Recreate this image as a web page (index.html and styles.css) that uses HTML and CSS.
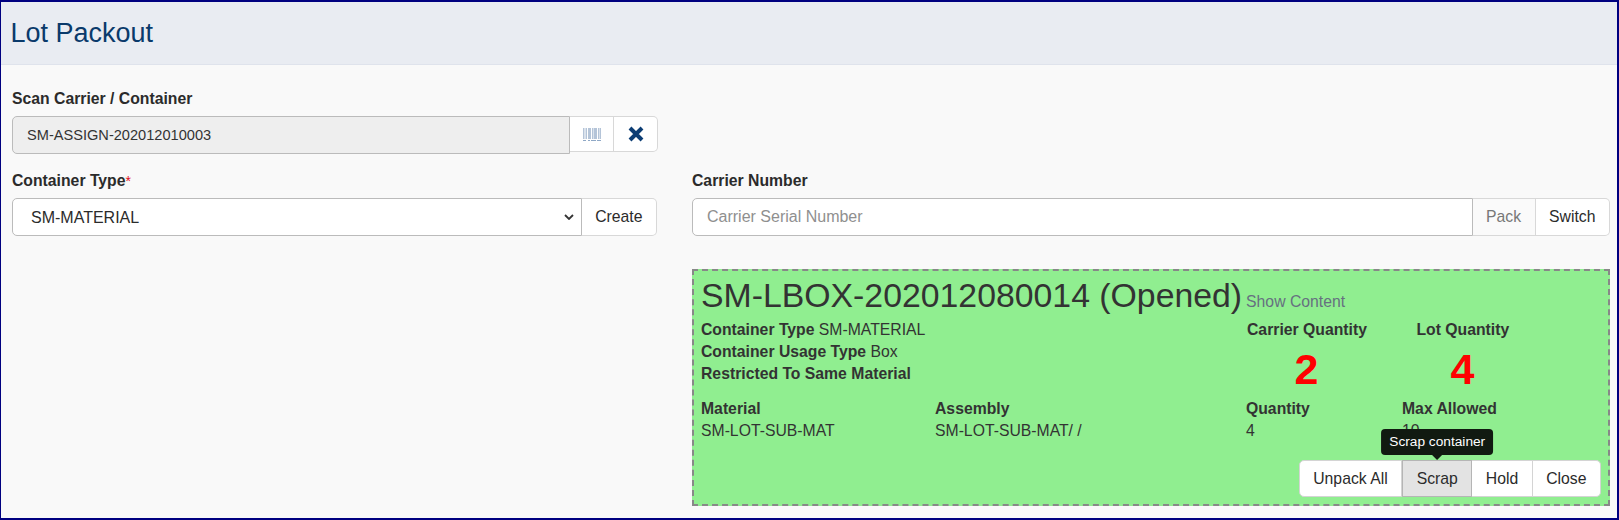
FILE: index.html
```html
<!DOCTYPE html>
<html lang="en">
<head>
    <meta charset="UTF-8">
    <title>Lot Packout</title>
    <link rel="stylesheet" href="styles.css">
</head>
<body>
    <div class="page">
        <h1 class="page-title">Lot Packout</h1>
        <div class="content">
            <div class="scan-row">
                <label class="field-label">Scan Carrier / Container</label>
                <div class="input-group">
                    <input type="text" class="text-input scan-input" value="SM-ASSIGN-202012010003" disabled>
                    <button class="btn btn-icon" title="Scan">
                        <svg width="18" height="13" viewBox="0 0 18 13">
                            <path d="M0 0h1.500v11H0zM2.500 0h1.500v11H2.500zM5 0h3v11H5zM9 0h1.500v11H9zM11 0h3v11h-3zM15 0h1v11h-1zM16.500 0h1.500v11h-1.500z" fill="#b4c4d8"/>
                            <path d="M0 12.500h3M5 12.500h2M8 12.500h5M14 12.500h4" stroke="#8fa8c6" stroke-width="1"/>
                        </svg>
                    </button>
                    <button class="btn btn-icon" title="Clear">
                        <svg width="16" height="16" viewBox="0 0 16 16">
                            <path d="M2 2l12 12M14 2L2 14" stroke="#0c3d74" stroke-width="4" fill="none"/>
                        </svg>
                    </button>
                </div>
            </div>

            <div class="form-columns">
                <div>
                    <label class="field-label">Container Type<span class="required">*</span></label>
                    <div class="input-group">
                        <select class="select-input">
                            <option>SM-MATERIAL</option>
                        </select>
                        <button class="btn">Create</button>
                    </div>
                </div>

                <div>
                    <label class="field-label">Carrier Number</label>
                    <div class="input-group">
                        <input type="text" class="text-input carrier-input" placeholder="Carrier Serial Number">
                        <button class="btn btn-disabled">Pack</button>
                        <button class="btn">Switch</button>
                    </div>

                    <div class="container-card">
                        <div class="card-heading">
                            <span class="card-title">SM-LBOX-202012080014 (Opened)</span>
                            <a class="show-content">Show Content</a>
                        </div>
                        <div class="card-grid">
                            <div class="card-info">
                                <div><b>Container Type</b> SM-MATERIAL</div>
                                <div><b>Container Usage Type</b> Box</div>
                                <div><b>Restricted To Same Material</b></div>
                            </div>
                            <div class="qty-block qty-carrier">
                                <b>Carrier Quantity</b>
                                <div class="qty-number">2</div>
                            </div>
                            <div class="qty-block qty-lot">
                                <b>Lot Quantity</b>
                                <div class="qty-number">4</div>
                            </div>
                        </div>
                        <div class="material-grid">
                            <div><b>Material</b><div>SM-LOT-SUB-MAT</div></div>
                            <div><b>Assembly</b><div>SM-LOT-SUB-MAT/ /</div></div>
                            <div><b>Quantity</b><div>4</div></div>
                            <div><b>Max Allowed</b><div>10</div></div>
                        </div>
                        <div class="card-actions">
                            <div class="btn-group">
                                <button class="btn">Unpack All</button>
                                <button class="btn btn-hover">Scrap
                                    <span class="tooltip">Scrap container</span>
                                </button>
                                <button class="btn">Hold</button>
                                <button class="btn">Close</button>
                            </div>
                        </div>
                    </div>
                </div>
            </div>
        </div>
    </div>
</body>
</html>
```

FILE: styles.css
```css
* {
    box-sizing: border-box;
}
html, body {
    margin: 0;
    height: 100%;
}
body {
    font-family: "Liberation Sans", Arial, sans-serif;
    font-size: 15.750px;
    color: #2b2b2b;
    background-color: #f9f9f9;
}
.page {
    height: 520px;
    border: solid #000080;
    border-width: 2px 2px 2px 1px;
    overflow: hidden;
}
.page-title {
    margin: 0;
    height: 63px;
    padding: 0 0 0 9.500px;
    font-size: 27px;
    font-weight: normal;
    line-height: 62px;
    color: #0a3a6b;
    background-color: #e9ecf2;
    border-bottom: 1px solid #dfe3ec;
}
.content {
    padding: 24px 8px 0 11px;
}
.field-label {
    display: block;
    height: 20px;
    margin-bottom: 7px;
    line-height: 20px;
    font-weight: bold;
}
.required {
    font-weight: normal;
    font-size: 14px;
    color: #e0101a;
}
.scan-row {
    width: 646px;
    margin-bottom: 17px;
}
.form-columns {
    display: grid;
    grid-template-columns: 645px 918px;
    column-gap: 35px;
}
.input-group {
    display: flex;
    height: 38px;
}
.text-input, .select-input {
    flex: 1;
    min-width: 0;
    height: 38px;
    padding: 0 14px;
    font: inherit;
    font-size: 16px;
    color: #2b2b2b;
    background-color: #fff;
    border: 1px solid #bbb;
    border-radius: 5px 0 0 5px;
    outline: none;
}
.text-input:disabled {
    background-color: #eee;
    color: #333;
}
.scan-input {
    font-size: 14.600px;
}
.select-input {
    padding-left: 18px;
    appearance: none;
    background-image: url("data:image/svg+xml,%3Csvg xmlns='http://www.w3.org/2000/svg' width='10' height='6'%3E%3Cpath d='M1 1l4 4 4-4' stroke='%23333' stroke-width='1.800' fill='none'/%3E%3C/svg%3E");
    background-repeat: no-repeat;
    background-position: right 7px center;
}
.carrier-input::placeholder {
    color: #8f8f8f;
}
.btn {
    position: relative;
    height: 38px;
    padding: 0 13.500px;
    font: inherit;
    color: #2b2b2b;
    background-color: #fff;
    border: 1px solid #d8d8d8;
    border-left: none;
    cursor: pointer;
}
.input-group .btn:last-child {
    border-radius: 0 5px 5px 0;
}
.btn-icon {
    height: 36px;
    width: 44px;
    padding: 0;
}
.btn-icon svg {
    display: block;
    margin: 0 auto;
}
.btn-disabled {
    color: #777;
    background-color: #fafafa;
}
.container-card {
    margin-top: 33px;
    height: 237px;
    padding: 3px 7px 7px;
    background-color: #90ee90;
    border: 2px dashed #888;
    color: #333;
}
.card-heading {
    display: flex;
    align-items: baseline;
    gap: 4px;
    height: 42px;
}
.card-title {
    font-size: 33.800px;
    line-height: 42px;
}
.show-content {
    color: #667080;
    cursor: pointer;
}
.card-grid {
    display: flex;
    height: 77px;
    margin-top: 3px;
}
.card-info {
    width: 546px;
    line-height: 22px;
}
.qty-block {
    line-height: 22px;
    text-align: center;
    white-space: nowrap;
}
.qty-carrier {
    width: 119px;
}
.qty-lot {
    width: 92px;
    margin-left: 50.500px;
}
.qty-number {
    margin-top: 6px;
    font-size: 43px;
    line-height: 44px;
    font-weight: bold;
    color: #f00;
}
.material-grid {
    display: grid;
    grid-template-columns: 234px 311px 156px auto;
    margin-top: 2px;
    line-height: 22px;
}
.card-actions {
    display: flex;
    justify-content: flex-end;
    margin-top: 18px;
}
.btn-group {
    display: flex;
}
.btn-group .btn {
    height: 37px;
    border-color: #d4d4d4;
}
.btn-group .btn:first-child {
    border-left: 1px solid #d4d4d4;
    border-radius: 5px 0 0 5px;
}
.btn-group .btn:last-child {
    border-radius: 0 5px 5px 0;
}
.btn-group .btn-hover {
    background-color: #e3e3e3;
    border-left: 1px solid #b5b5b5;
    border-color: #b5b5b5;
}
/* hover tooltip sits above the button */
.tooltip {
    position: absolute;
    bottom: 41px;
    left: 50%;
    transform: translateX(-50%);
    padding: 0 8px;
    height: 26px;
    line-height: 26px;
    font-size: 13.700px;
    white-space: nowrap;
    color: #fff;
    background-color: #111a11;
    border-radius: 4px;
}
.tooltip::after {
    content: "";
    position: absolute;
    top: 100%;
    left: 50%;
    margin-left: -5px;
    border: 5px solid transparent;
    border-bottom: none;
    border-top-color: #111a11;
}
```
